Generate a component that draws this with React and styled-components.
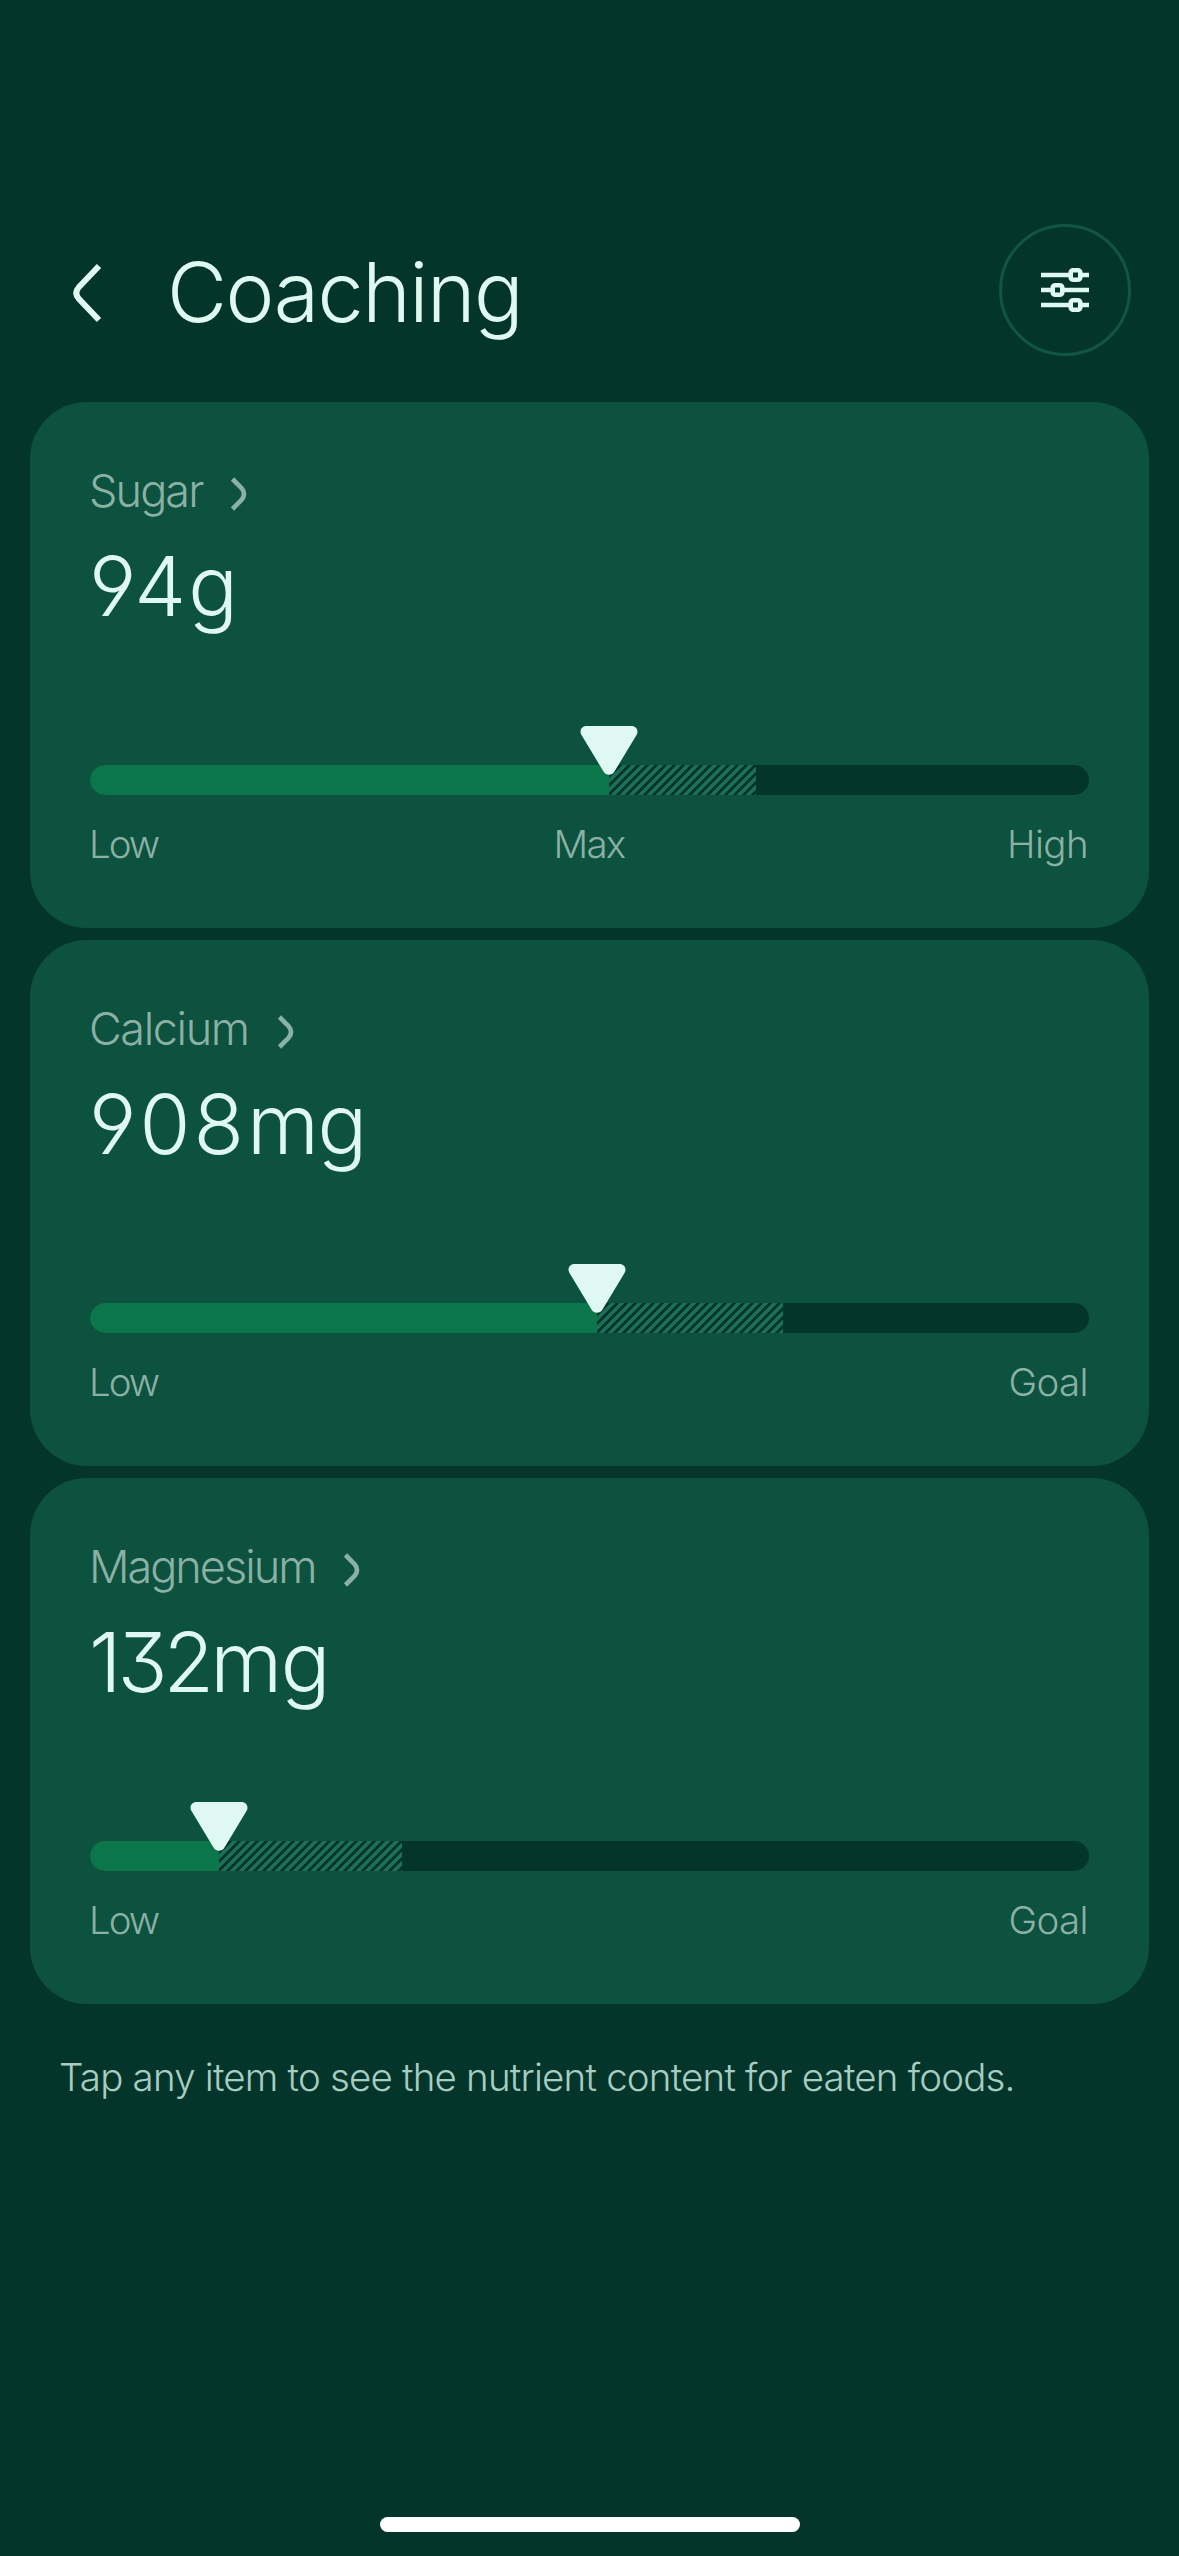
import React from "react";
import styled, { createGlobalStyle, ThemeProvider } from "styled-components";

const theme = {
  background: "#04352a",
  card: "#0d523f",
  fill: "#0c764b",
  stripe: "#1b6f56",
  outline: "#125542",
  text: "#dff8f1",
  muted: "#8bb0a4",
  note: "#a6cdc1",
};

const GlobalStyle = createGlobalStyle`
  * {
    box-sizing: border-box;
  }

  body {
    margin: 0;
    background-color: #04352a;
    font-family: Inter, "Liberation Sans", sans-serif;
    font-weight: 330;
    font-optical-sizing: none;
    -webkit-font-smoothing: antialiased;
  }
`;

const Screen = styled.div`
  display: flex;
  flex-direction: column;
  width: 1179px;
  height: 2556px;
  padding-top: 224px;
  overflow: hidden;
  color: ${(props) => props.theme.text};
  background-color: ${(props) => props.theme.background};
`;

const Header = styled.header`
  display: flex;
  align-items: center;
  height: 132px;
  padding: 0 48px 0 71px;
`;

const BackButton = styled.button`
  display: flex;
  width: 32px;
  margin-top: 6px;
  padding: 0;
  border: none;
  color: inherit;
  background: none;
`;

const Title = styled.h1`
  flex: 1;
  margin: 4px 0 0 64px;
  font-size: 82.5px;
  font-weight: 350;
  line-height: 104px;
  letter-spacing: -1.5px;
`;

const FilterButton = styled.button`
  display: flex;
  align-items: center;
  justify-content: center;
  width: 132px;
  height: 132px;
  padding: 0;
  border: 3px solid ${(props) => props.theme.outline};
  border-radius: 50%;
  color: inherit;
  background: none;
`;

const CardList = styled.main`
  display: flex;
  flex-direction: column;
  gap: 12px;
  margin-top: 46px;
  padding: 0 30px;
`;

const Card = styled.section`
  display: flex;
  flex-direction: column;
  height: 526px;
  padding: 60px;
  border-radius: 57px;
  background-color: ${(props) => props.theme.card};
`;

const CardLabel = styled.div`
  display: flex;
  align-items: center;
  gap: 28px;
  margin-left: -1px;
  color: ${(props) => props.theme.muted};
  font-size: 45px;
  line-height: 58px;
  letter-spacing: ${(props) => props.$tracking}px;

  svg {
    margin-top: 6px;
  }
`;

const CardValue = styled.div`
  margin-top: 16px;
  font-size: 82.5px;
  font-weight: 350;
  line-height: 100px;
  letter-spacing: -1.5px;
  font-feature-settings: "cv09", "cv04";
`;

const Amount = styled.span`
  margin-left: -1px;
  letter-spacing: ${(props) => props.$tracking}px;
`;

const Gauge = styled.div`
  position: relative;
  margin-top: 129px;
`;

const Track = styled.div`
  display: flex;
  height: 30px;
  border-radius: 15px;
  overflow: hidden;
  background-color: ${(props) => props.theme.background};
`;

const TrackFill = styled.div`
  background-color: ${(props) => props.theme.fill};
`;

const TrackStripes = styled.div`
  background-image: repeating-linear-gradient(
    135deg,
    transparent 0,
    transparent 3.364px,
    ${(props) => props.theme.stripe} 3.364px,
    ${(props) => props.theme.stripe} 6.364px
  );
`;

const Marker = styled.svg`
  position: absolute;
  top: -39px;
  width: 58px;
  height: 49px;
  transform: translateX(-50%);
`;

const Scale = styled.div`
  display: grid;
  grid-template-columns: 1fr auto 1fr;
  margin-top: 25px;
  padding-right: 1px;
  color: ${(props) => props.theme.muted};
  font-size: 38.5px;
  line-height: 48px;
`;

const ScaleStart = styled.span`
  margin-left: -1px;
  letter-spacing: -2.1px;
`;

const ScaleMiddle = styled.span`
  letter-spacing: -1.8px;
`;

const ScaleEnd = styled.span`
  text-align: right;
  letter-spacing: -0.6px;
`;

const Note = styled.p`
  margin: 49px 60px 0 59px;
  color: ${(props) => props.theme.note};
  font-size: 38.5px;
  line-height: 48px;
  letter-spacing: -0.81px;
  white-space: nowrap;
`;

const HomeIndicator = styled.div`
  width: 420px;
  height: 15px;
  margin: auto auto 24px;
  border-radius: 8px;
  background-color: #ffffff;
`;

const nutrients = [
  { name: "Sugar", amount: 94, unit: "g", fill: 519, limit: 666, middle: "Max", end: "High", nameTracking: -1.9, amountTracking: 2 },
  { name: "Calcium", amount: 908, unit: "mg", fill: 507, limit: 693, end: "Goal", nameTracking: -1.4, amountTracking: 3 },
  { name: "Magnesium", amount: 132, unit: "mg", fill: 129, limit: 312, end: "Goal", nameTracking: -2, amountTracking: -4 },
];

const BackIcon = () => (
  <svg width="32" height="60" viewBox="0 0 32 60" fill="none" stroke="currentColor" strokeWidth="6">
    <path d="M28 3 L8 24 Q2.5 30 8 36 L28 57" />
  </svg>
);

const ChevronIcon = () => (
  <svg width="17" height="34" viewBox="0 0 17 34" fill="none" stroke="currentColor" strokeWidth="4.6">
    <path d="M2.5 2 L11.5 11 Q16.5 17 11.5 23 L2.5 32" />
  </svg>
);

const SlidersIcon = () => (
  <svg width="48" height="44" viewBox="0 0 48 44" fill="none" stroke="currentColor" strokeWidth="4.6">
    <path d="M0 7 H30 M39 7 H48 M0 22 H12 M21 22 H48 M0 37 H30 M39 37 H48" />
    <rect x="29.7" y="2.2" width="9.6" height="9.6" rx="2.6" />
    <rect x="11.7" y="17.2" width="9.6" height="9.6" rx="2.6" />
    <rect x="29.7" y="32.2" width="9.6" height="9.6" rx="2.6" />
  </svg>
);

const NutrientCard = ({ nutrient }) => (
  <Card>
    <CardLabel $tracking={nutrient.nameTracking}>
      {nutrient.name}
      <ChevronIcon />
    </CardLabel>
    <CardValue>
      <Amount $tracking={nutrient.amountTracking}>{nutrient.amount}</Amount>
      {nutrient.unit}
    </CardValue>
    <Gauge>
      <Track>
        <TrackFill style={{ width: nutrient.fill }} />
        <TrackStripes style={{ width: nutrient.limit - nutrient.fill }} />
      </Track>
      <Marker viewBox="0 0 58 49" style={{ left: nutrient.fill }}>
        <path
          d="M6.5 0 H51.5 C56.5 0 59 5 56.5 9 L34.5 45.5 C32 49.8 26 49.8 23.5 45.5 L1.5 9 C-1 5 1.5 0 6.5 0 Z"
          fill="#dff8f1"
        />
      </Marker>
    </Gauge>
    <Scale>
      <ScaleStart>Low</ScaleStart>
      <ScaleMiddle>{nutrient.middle}</ScaleMiddle>
      <ScaleEnd>{nutrient.end}</ScaleEnd>
    </Scale>
  </Card>
);

const App = () => {
  return (
    <ThemeProvider theme={theme}>
      <GlobalStyle />
      <Screen>
        <Header>
          <BackButton aria-label="Back">
            <BackIcon />
          </BackButton>
          <Title>Coaching</Title>
          <FilterButton aria-label="Filters">
            <SlidersIcon />
          </FilterButton>
        </Header>
        <CardList>
          {nutrients.map((nutrient) => (
            <NutrientCard key={nutrient.name} nutrient={nutrient} />
          ))}
        </CardList>
        <Note>Tap any item to see the nutrient content for eaten foods.</Note>
        <HomeIndicator />
      </Screen>
    </ThemeProvider>
  );
};

export default App;
